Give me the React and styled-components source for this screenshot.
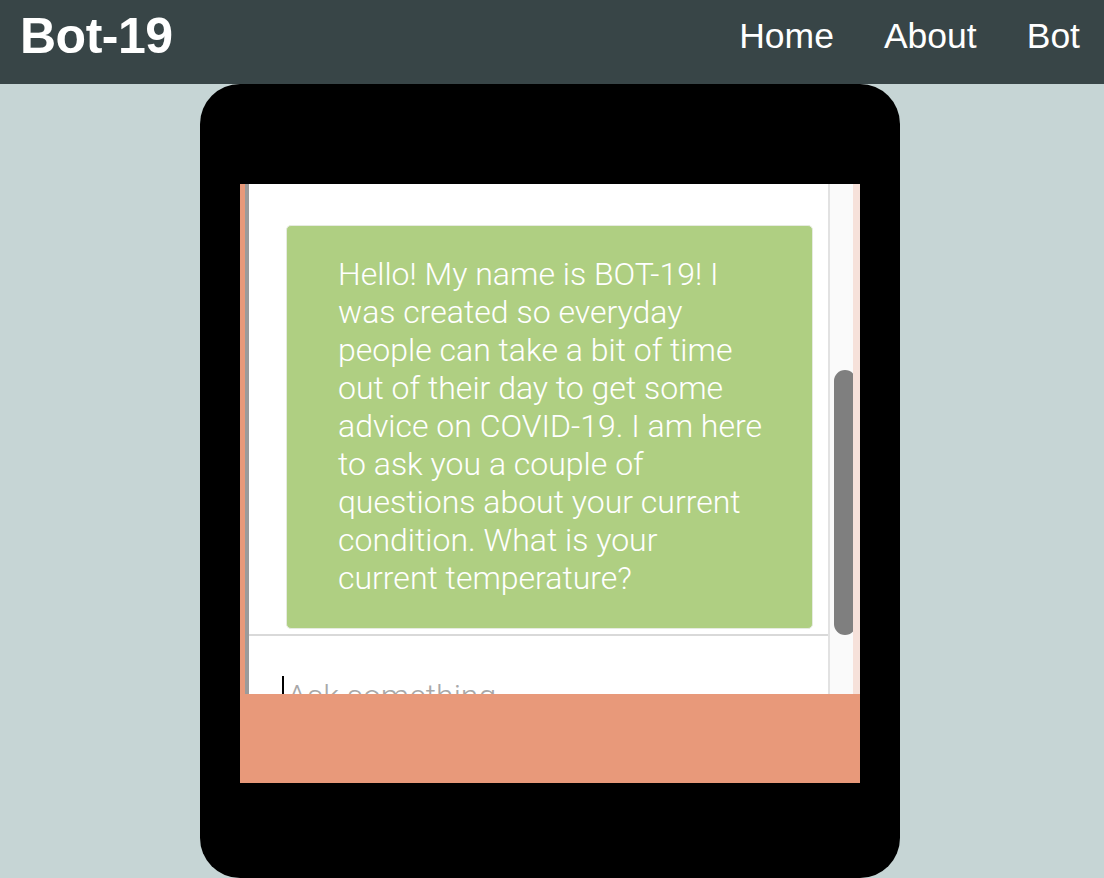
import React from "react";
import styled, { createGlobalStyle } from "styled-components";

const Global = createGlobalStyle`
  html, body { margin: 0; padding: 0; }
  body { background: #c6d5d5; font-family: "Liberation Sans", Arial, sans-serif; overflow: hidden; }
`;

const Header = styled.header`
  height: 84px;
  background: #384547;
  display: flex;
  align-items: center;
  justify-content: space-between;
  padding: 0 24px 0 20px;
  box-sizing: border-box;
`;

const Brand = styled.div`
  color: #fff;
  font-weight: 700;
  font-size: 50px;
  letter-spacing: -0.5px;
  margin-top: -12px;
`;

const Nav = styled.nav`
  display: flex;
  gap: 50px;
  margin-top: -12px;
`;

const NavLink = styled.a`
  color: #fff;
  font-size: 35.5px;
  text-decoration: none;
`;

const Main = styled.main`
  display: flex;
  justify-content: center;
  padding-right: 4px;
`;

const Phone = styled.div`
  width: 700px;
  height: 794px;
  background: #000;
  border-radius: 40px;
  padding: 100px 40px 0;
  box-sizing: border-box;
`;

const Screen = styled.div`
  width: 620px;
  height: 599px;
  background: #e8997a;
  display: flex;
  flex-direction: column;
`;

const ChatWindow = styled.div`
  height: 510px;
  flex-shrink: 0;
  margin-left: 5px;
  border-left: 4px solid #9b9b9b;
  border-right: 7px solid #f6e1da;
  background: #fff;
  display: flex;
  overflow: hidden;
`;

const Content = styled.div`
  flex: 1;
  display: flex;
  flex-direction: column;
  min-width: 0;
`;

const Messages = styled.div`
  height: 452px;
  flex-shrink: 0;
  box-sizing: border-box;
  padding: 41px 15px 0 37px;
  border-bottom: 2px solid #d9d9d9;
`;

const Bubble = styled.div`
  background: #afcf82;
  border: 1px solid #e6ebe0;
  border-radius: 5px;
  padding: 29px 49px 31px 51px;
  color: #fff;
  font-family: Roboto, "Noto Sans", sans-serif;
  font-weight: 300;
  font-size: 32px;
  line-height: 38px;
`;

const InputRow = styled.div`
  flex-shrink: 0;
  padding: 40px 0 0 33px;
  display: flex;
  align-items: flex-start;
`;

const Input = styled.input`
  border: none;
  outline: none;
  padding: 0 0 0 3px;
  border-left: 2px solid #000;
  margin: 0;
  width: 400px;
  height: 40px;
  font-family: Roboto, "Noto Sans", sans-serif;
  font-weight: 300;
  font-size: 32px;
  color: #333;
  background: transparent;
  &::placeholder { color: #a8a8a8; }
`;

const Track = styled.div`
  width: 23px;
  background: #fafafa;
  border-left: 2px solid #e2e2e2;
  position: relative;
`;

const Thumb = styled.div`
  position: absolute;
  left: 4px;
  top: 186px;
  width: 22px;
  height: 265px;
  border-radius: 11px;
  background: #7f7f7f;
`;

const Footer = styled.div`
  flex: 1;
  background: #e8997a;
`;

export default function App() {
  return (
    <>
      <Global />
      <Header>
        <Brand>Bot-19</Brand>
        <Nav>
          <NavLink href="#">Home</NavLink>
          <NavLink href="#">About</NavLink>
          <NavLink href="#">Bot</NavLink>
        </Nav>
      </Header>
      <Main>
        <Phone>
          <Screen>
            <ChatWindow>
              <Content>
                <Messages>
                  <Bubble>
                    Hello! My name is BOT-19! I was created so everyday people can take a bit of time out of their day to get some advice on COVID-19. I am here to ask you a couple of questions about your current condition. What is your current temperature?
                  </Bubble>
                </Messages>
                <InputRow>
                  <Input placeholder="Ask something..." />
                </InputRow>
              </Content>
              <Track>
                <Thumb />
              </Track>
            </ChatWindow>
            <Footer />
          </Screen>
        </Phone>
      </Main>
    </>
  );
}
